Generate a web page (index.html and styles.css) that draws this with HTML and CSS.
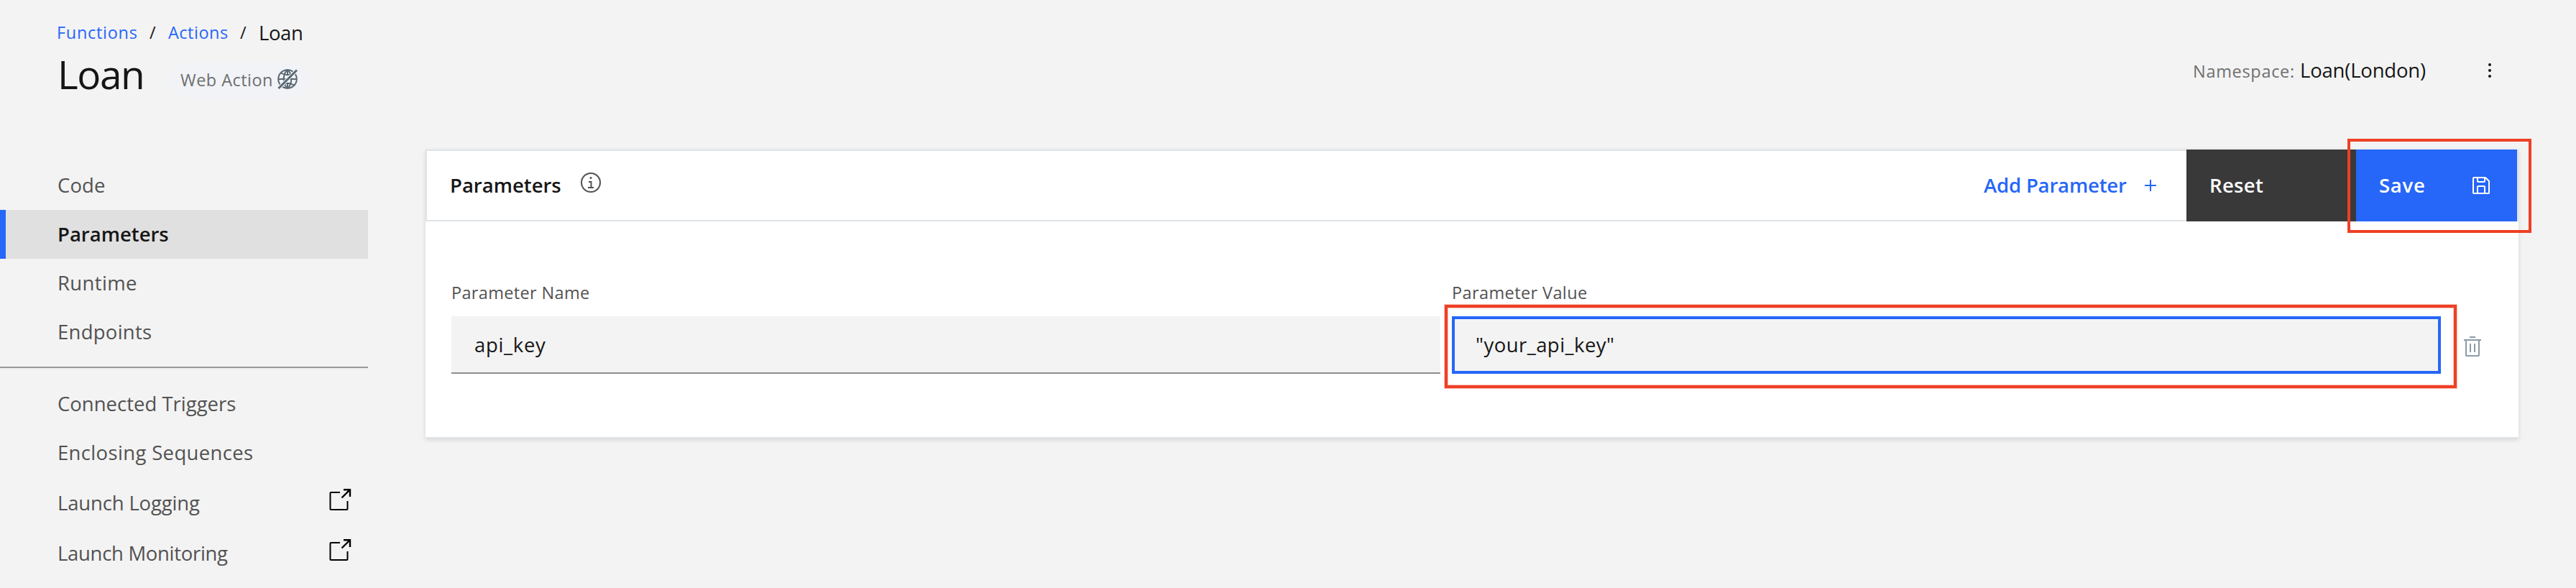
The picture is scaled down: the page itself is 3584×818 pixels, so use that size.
FILE: index.html
```html
<!DOCTYPE html>
<html lang="en">
<head>
<meta charset="utf-8">
<title>Loan</title>
<link rel="stylesheet" href="styles.css">
</head>
<body>
<header class="page-header">
  <div class="heading">
    <nav class="breadcrumb">
      <a class="crumb crumb-functions">Functions</a><span class="slash">/</span>
      <a class="crumb crumb-actions">Actions</a><span class="slash">/</span>
      <span class="crumb-current">Loan</span>
    </nav>
    <div class="title-row">
      <h1 class="title">Loan</h1>
      <div class="tag"><span class="tag-text">Web Action</span>
        <svg class="tag-icon" viewBox="0 0 28 28" fill="none" stroke="#5a6872" stroke-width="2">
          <circle cx="14" cy="14" r="12.800"/>
          <path d="M1 14h26M14 1v8M14 19v8M14 1C7 7 7 21 14 27M14 1C21 7 21 21 14 27M4.500 5.500Q14 11 23.500 5.500M4.500 22.500Q14 17 23.500 22.500"/>
          <path d="M1.500 27L27 1.500" stroke="#f1f3f7" stroke-width="5"/>
          <path d="M1.500 27L27 1.500" stroke-width="3"/>
        </svg>
      </div>
    </div>
  </div>
  <div class="namespace">
    <span class="ns-label">Namespace:</span><span class="ns-value">Loan(London)</span>
    <svg class="overflow" viewBox="0 0 4 20"><circle cx="2" cy="2" r="2"/><circle cx="2" cy="10" r="2"/><circle cx="2" cy="18" r="2"/></svg>
  </div>
</header>
<div class="content">
  <nav class="sidebar">
    <a class="item t-code">Code</a>
    <a class="item selected">Parameters</a>
    <a class="item t-runtime">Runtime</a>
    <a class="item t-endpoints">Endpoints</a>
    <div class="divider"></div>
    <a class="item">Connected Triggers</a>
    <a class="item t-sequences">Enclosing Sequences</a>
    <a class="item launch t-logging">Launch Logging
      <svg class="launch-icon" viewBox="0 0 30 30" fill="none" stroke="#000" stroke-width="2"><path d="M15 5H2.500Q1.500 5 1.500 6V28Q1.500 29 2.500 29H24.500Q25.500 29 25.500 28V17"/><path d="M20 1.200H29V11M29 1.200L17.500 12.500" stroke-width="2.400"/></svg>
    </a>
    <a class="item launch t-monitoring">Launch Monitoring
      <svg class="launch-icon" viewBox="0 0 30 30" fill="none" stroke="#000" stroke-width="2"><path d="M15 5H2.500Q1.500 5 1.500 6V28Q1.500 29 2.500 29H24.500Q25.500 29 25.500 28V17"/><path d="M20 1.200H29V11M29 1.200L17.500 12.500" stroke-width="2.400"/></svg>
    </a>
  </nav>
  <main class="panel">
    <div class="panel-header">
      <h2 class="panel-title">Parameters</h2>
      <svg class="info" viewBox="0 0 28 28" fill="none" stroke="#525252" stroke-width="2"><circle cx="14" cy="14" r="13"/><path d="M11 13h3.500v8M10 21h8"/><circle cx="14" cy="7.500" r="1.500" fill="#525252" stroke="none"/></svg>
      <button class="add"><span>Add Parameter</span><svg class="plus" viewBox="0 0 16 16" stroke="#2666f8" stroke-width="2"><path d="M8 0v16M0 8h16"/></svg></button>
      <button class="reset">Reset</button>
      <button class="save"><span>Save</span>
        <svg class="save-icon" viewBox="0 0 24 24" fill="none" stroke="#fff" stroke-width="2"><path d="M18 1H2Q1 1 1 2V22Q1 23 2 23H22Q23 23 23 22V6L18 1M7 1V6Q7 7 8 7H16Q17 7 17 6V1M7 23V14Q7 13 8 13H16Q17 13 17 14V23"/></svg>
      </button>
    </div>
    <div class="fields">
      <div class="field">
        <label class="label">Parameter Name</label>
        <div class="input t-key">api_key</div>
      </div>
      <div class="field">
        <label class="label label-value">Parameter Value</label>
        <div class="input focused">"your_api_key"<span class="callout callout-field"></span></div>
      </div>
      <svg class="trash" viewBox="0 0 24 28" fill="none" stroke="#8c9ba5" stroke-width="2"><path d="M8 1h8M0 5h24M3 5V26Q3 27 4 27H20Q21 27 21 26V5M9 10v12M15 10v12"/></svg>
    </div>
    <span class="callout callout-save"></span>
  </main>
</div>
</body>
</html>
```
FILE: styles.css
```css
* { box-sizing: border-box; }
body {
  margin: 0;
  width: 3584px;
  height: 818px;
  overflow: hidden;
  background: #f3f3f3;
  color: #161616;
  font: 27.5px/68px "Open Sans", "Noto Sans", sans-serif;
}
h1, h2 { margin: 0; }
svg { display: block; flex: none; overflow: visible; }

.page-header { display: flex; justify-content: space-between; height: 208px; padding: 25px 118px 0 79px; }
.breadcrumb { display: flex; height: 40px; line-height: 40px; font-size: 23.5px; }
.crumb { color: #2666f8; }
.crumb-functions { width: 128px; letter-spacing: 0.7px; }
.crumb-actions { width: 99px; letter-spacing: 0.5px; }
.slash { width: 27px; padding-left: 1px; }
.crumb-current { padding-top: 1px; font-size: 27.5px; letter-spacing: -0.39px; }
.title-row { display: flex; margin-top: 3px; }
.title { width: 155px; padding-left: 1px; font-size: 55px; line-height: 70px; font-weight: 400; letter-spacing: -1.45px; }
.tag {
  display: flex;
  width: 196px;
  height: 49px;
  margin-top: 19px;
  padding-left: 17px;
  border-radius: 25px;
  background: #f1f3f7;
  color: #6f6f6f;
  font-size: 23.5px;
  line-height: 48px;
}
.tag-text { width: 135px; letter-spacing: 0.45px; }
.tag-icon { width: 28px; height: 28px; margin-top: 9px; }

.namespace { display: flex; align-items: baseline; height: 40px; margin-top: 53px; line-height: 40px; }
.ns-label { width: 150px; padding-left: 1px; color: #6f6f6f; font-size: 23.5px; letter-spacing: 0.69px; }
.ns-value { width: 262px; letter-spacing: -0.2px; }
.overflow { width: 4px; height: 20px; align-self: center; fill: #161616; }

.content { display: flex; }
.sidebar { width: 512px; margin: 16px 80px 0 0; color: #525252; }
.item { display: flex; height: 68px; padding-left: 80px; }
.selected { padding-left: 72px; border-left: 8px solid #2666f8; background: #e0e0e0; color: #161616; font-weight: 600; }
.divider { height: 4px; margin: 14px 0; border-top: 2px solid #999; border-bottom: 2px solid #eee; }
.launch { justify-content: space-between; height: 70px; padding: 2px 24px 0 80px; }
.launch-icon { width: 30px; height: 30px; margin-top: 14px; }
.t-code { letter-spacing: 0.1px; }
.t-runtime { letter-spacing: 0.35px; }
.t-endpoints { letter-spacing: 0.26px; }
.t-sequences { letter-spacing: 0.34px; }
.t-logging { letter-spacing: -0.16px; }
.t-monitoring { letter-spacing: -0.31px; }

.panel {
  position: relative;
  width: 2912px;
  height: 402px;
  border-bottom: 2px solid #dfe4e8;
  background: #fff;
  box-shadow: 0 2px 6px rgba(0, 0, 0, 0.12);
}
.panel-header {
  display: flex;
  align-items: center;
  height: 100px;
  padding-left: 32px;
  border: 2px solid #dfe4e8;
}
.panel-title { width: 182px; font-size: 27.5px; font-weight: 600; }
.info { width: 28px; height: 28px; margin-bottom: 8px; }
button {
  display: flex;
  align-items: center;
  justify-content: space-between;
  padding: 0;
  border: 0;
  color: #fff;
  font: 600 27.5px/68px "Open Sans", "Noto Sans", sans-serif;
}
.add { width: 240px; height: 96px; margin: 0 42px 0 auto; background: none; color: #2666f8; letter-spacing: -0.17px; }
.plus { width: 16px; height: 16px; }
.reset { width: 236px; height: 100px; padding-left: 32px; background: #393939; letter-spacing: 0.34px; }
.save { width: 224px; height: 100px; padding: 0 38px 0 32px; background: #2666f8; letter-spacing: 0.75px; }
.save-icon { width: 24px; height: 24px; }

.fields { display: flex; gap: 16px; padding: 79px 52px 0 36px; }
.field { width: 1376px; }
.label { display: block; height: 53px; color: #525252; font-size: 23.5px; line-height: 40px; letter-spacing: 0.34px; }
.label-value { letter-spacing: 0.39px; }
.input { height: 80px; padding-left: 32px; border-bottom: 2px solid #8d8d8d; background: #f3f3f3; line-height: 80px; letter-spacing: 0.45px; }
.t-key { letter-spacing: 0.67px; }
.focused { position: relative; padding-left: 29px; border: 4px solid #2666f8; line-height: 72px; }
.trash { width: 24px; height: 28px; margin: 81px 0 0 16px; }

/* Highlight frames drawn over the interface */
.callout { position: absolute; border: 4px solid #ee4025; }
.callout-field { inset: -20px -26px -24px -14px; box-shadow: 0 0 0 1px rgba(238, 64, 37, 0.3), inset 0 0 0 1px rgba(238, 64, 37, 0.3); }
.callout-save { top: -15px; right: -18px; width: 256px; height: 131px; }
```
